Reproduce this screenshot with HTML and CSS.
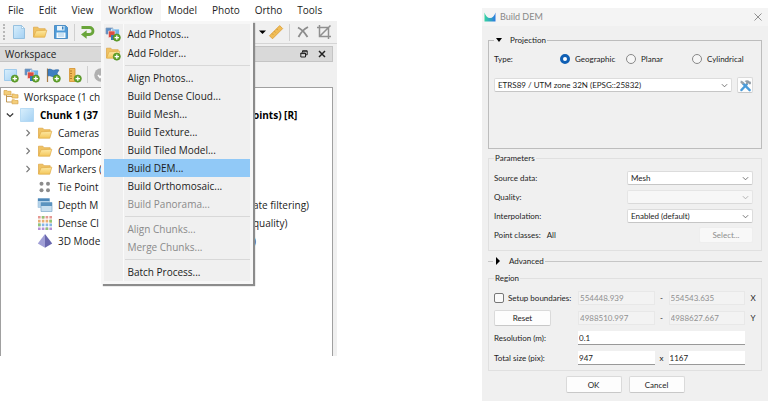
FILE: index.html
```html
<!DOCTYPE html>
<html lang="en">
<head>
<meta charset="utf-8">
<title>Build DEM</title>
<link rel="stylesheet" href="styles.css">
</head>
<body>
<svg class="defs" aria-hidden="true">
  <defs>
    <linearGradient id="gBlue" x1="0" y1="0" x2="1" y2="1"><stop offset="0" stop-color="#d9effc"/><stop offset="1" stop-color="#a3d0f3"/></linearGradient>
    <linearGradient id="gFold" x1="0" y1="0" x2="0" y2="1"><stop offset="0" stop-color="#fde9a4"/><stop offset="1" stop-color="#f3c65a"/></linearGradient>
    <linearGradient id="gLogo" x1="0" y1="0" x2="1" y2="0"><stop offset="0" stop-color="#35d5a0"/><stop offset="1" stop-color="#2b79e0"/></linearGradient>
    <symbol id="plus" viewBox="0 0 16 16"><circle cx="11.8" cy="11.6" r="3.6" fill="#62a32c" stroke="#4c8a1e" stroke-width=".6"/><path d="M11.8 9.4v4.4M9.6 11.6h4.4" stroke="#fff" stroke-width="1.3"/></symbol>
    <symbol id="folder" viewBox="0 0 16 16"><path d="M1.5 13V3.2h4.3l1.4 1.5h6V7" fill="#efc263" stroke="#dca543" stroke-width=".7"/><path d="M1.5 13.2 4 6.8l10.8-.6-2 7z" fill="url(#gFold)" stroke="#dfab48" stroke-width=".7"/></symbol>
    <symbol id="photos" viewBox="0 0 16 16"><path d="M1 2h7v6H1z" fill="#5d8fc6" stroke="#7e99b7" stroke-width=".7"/><path d="M6.5 3h8v7h-8z" fill="#72b5e6" stroke="#eef4f8" stroke-width=".8"/><path d="M3.5 5h6.5v6.5H3.500z" fill="#dc4d42" stroke="#f3d9d6" stroke-width=".7"/><path d="M6 9h5v5H6z" fill="#3778b7"/></symbol>
  </defs>
</svg>
<main class="stage">
  <section class="app">
    <nav class="menubar">
      <button>File</button><button>Edit</button><button>View</button>
      <div class="menu-anchor">
        <button class="open">Workflow</button>
        <div class="menu" role="menu">
          <button class="tall"><svg viewBox="0 0 16 16"><use href="#photos"/><use href="#plus"/></svg><span>Add Photos...</span></button>
          <button class="tall"><svg viewBox="0 0 16 16"><use href="#folder"/><use href="#plus"/></svg><span>Add Folder...</span></button>
          <hr>
          <button><span>Align Photos...</span></button>
          <button><span>Build Dense Cloud...</span></button>
          <button><span>Build Mesh...</span></button>
          <button><span>Build Texture...</span></button>
          <button><span>Build Tiled Model...</span></button>
          <button class="current"><span>Build DEM...</span></button>
          <button><span>Build Orthomosaic...</span></button>
          <button disabled><span>Build Panorama...</span></button>
          <hr>
          <button disabled><span>Align Chunks...</span></button>
          <button disabled><span>Merge Chunks...</span></button>
          <hr>
          <button><span>Batch Process...</span></button>
        </div>
      </div>
      <button>Model</button><button>Photo</button><button>Ortho</button><button>Tools</button>
    </nav>
    <div class="toolbar">
      <i class="grip"></i>
      <svg viewBox="0 0 16 16"><path d="M2.500 1.500h8l3 3v10h-11z" fill="url(#gBlue)" stroke="#8dbbdc" stroke-width=".9"/><path d="M10.500 1.500v3h3z" fill="#fff" stroke="#8dbbdc" stroke-width=".7"/></svg>
      <svg viewBox="0 0 16 16"><use href="#folder"/></svg>
      <svg viewBox="0 0 16 16"><path d="M1.500 1.500h11l2 2v11h-13z" fill="#4f9bd8" stroke="#3b82bd" stroke-width=".8"/><path d="M4 2h7.500v4.500H4z" fill="#e9f4fc"/><path d="M9 2.500h1.500v3H9z" fill="#3b82bd"/><path d="M3.500 8.500h9V14h-9z" fill="#f5fafd"/><path d="M5 10h6M5 12h6" stroke="#8ebfe3" stroke-width=".8"/></svg>
      <i class="sep"></i>
      <svg viewBox="0 0 16 16"><path d="M1.500 3.500h8a3.400 3.400 0 0 1 0 7H5" fill="none" stroke="#69a53a" stroke-width="2.800"/><path d="M6.600 6.200v8.600L1 10.500z" fill="#69a53a"/></svg>
      <svg viewBox="0 0 16 16"><path d="M12.500 3h-6a3.600 3.600 0 0 0 0 7.500H11" fill="none" stroke="#b5b5b5" stroke-width="2.800"/></svg>
      <span class="push"></span>
      <span class="measure"><svg class="mini" viewBox="0 0 8 16"><path d="M1 6.500h7L4.500 10z" fill="#000"/></svg>
      <svg viewBox="0 0 16 16"><path d="M1.500 11.800 11.700 1.600l3 3L4.500 14.800z" fill="#f0bd57" stroke="#d99a35" stroke-width=".8"/><path d="m4 9.500 1.300 1.300M6.300 7.200l1.300 1.300M8.600 4.900l1.300 1.300" stroke="#c98b2d" stroke-width=".7"/></svg></span>
      <i class="sep"></i>
      <svg viewBox="0 0 16 16"><path d="M3 3.500c4 2 7 5.500 9.500 9.500M13 3C9 5 5.500 9 3.500 13" fill="none" stroke="#8c8c8c" stroke-width="1.800"/></svg>
      <svg viewBox="0 0 16 16"><path d="M1 3.500h11.500V15M3.500 1v11.500H15M3.500 12.500l11-11" fill="none" stroke="#909090" stroke-width="1.500"/></svg>
    </div>
    <header class="pane-title"><span>Workspace</span>
      <button aria-label="Float"><svg viewBox="0 0 8 8"><path d="M2.500 2.500V.8h4.700v4H5.500M.8 3h4.700v4H.8zM.8 3.600h4.700M2.500 1.200h4.700" fill="none" stroke="#222" stroke-width="1"/></svg></button>
      <button aria-label="Close"><svg viewBox="0 0 8 8"><path d="m1 1 6 6M7 1 1 7" stroke="#222" stroke-width="1.500"/></svg></button>
    </header>
    <div class="toolbar second">
      <svg viewBox="0 0 16 16"><path d="M1.500 2.500h12v11h-12z" fill="url(#gBlue)" stroke="#8fc3ea" stroke-width=".8"/><use href="#plus"/></svg>
      <svg viewBox="0 0 16 16"><use href="#photos"/><use href="#plus"/></svg>
      <svg viewBox="0 0 16 16"><path d="M2.500 1.500V15" stroke="#a77b44" stroke-width="1.200"/><path d="M3 2.500c3-1.500 4 1.500 6.500.6 1.800-.6 3-.6 4.500-.1l-2 3.300 2 3.200c-2-.7-3.200-.3-4.500.2C7 10.600 5.500 7.800 3 9z" fill="#3f7fc1" stroke="#2c66a3" stroke-width=".6"/><use href="#plus"/></svg>
      <svg viewBox="0 0 16 16"><path d="M3.500 1.500H9v13H3.500z" fill="#f0b958" stroke="#d3922f" stroke-width=".8"/><path d="M4 4h2M4 6.500h2M4 9h2M4 11.500h2" stroke="#a86f1e" stroke-width=".8"/><use href="#plus"/></svg>
      <i class="sep"></i>
      <svg viewBox="0 0 16 16"><circle cx="8" cy="8" r="6.800" fill="#b0b0b0"/><path d="m5 8 2 2.500 4-5" fill="none" stroke="#fff" stroke-width="1.500"/></svg>
    </div>
    <ul class="tree">
      <li><span class="node"><svg viewBox="0 0 16 16"><path d="M3.500 5v8H9M3.500 7.500H9" fill="none" stroke="#b98f45" stroke-width=".9"/><path d="M1 1.500h3l.8.8H8V6H1zM9 5h2.500l.7.7H15V9H9zM9 10.800h2.500l.7.7H15v3.300H9z" fill="#f4ce79" stroke="#d9a54b" stroke-width=".7"/></svg>Workspace (1 ch</span></li>
      <li class="l1"><span class="node"><svg class="chev" viewBox="0 0 8 8"><path d="m.8 2.500 3.200 3 3.200-3" fill="none" stroke="#333" stroke-width="1.200"/></svg><svg viewBox="0 0 16 16"><path d="M1.500 1.500h13v13h-13z" fill="url(#gBlue)" stroke="#a5d1f0" stroke-width=".7"/></svg><b>Chunk 1 (37</b></span><b>oints) [R]</b></li>
      <li class="l2"><span class="node"><svg class="chev" viewBox="0 0 8 8"><path d="m2.500.8 3 3.200-3 3.200" fill="none" stroke="#777" stroke-width="1.200"/></svg><svg viewBox="0 0 16 16"><use href="#folder"/></svg>Cameras</span></li>
      <li class="l2"><span class="node"><svg class="chev" viewBox="0 0 8 8"><path d="m2.500.8 3 3.200-3 3.200" fill="none" stroke="#777" stroke-width="1.200"/></svg><svg viewBox="0 0 16 16"><use href="#folder"/></svg>Compone</span></li>
      <li class="l2"><span class="node"><svg class="chev" viewBox="0 0 8 8"><path d="m2.500.8 3 3.200-3 3.200" fill="none" stroke="#777" stroke-width="1.200"/></svg><svg viewBox="0 0 16 16"><use href="#folder"/></svg>Markers (</span></li>
      <li class="l2"><span class="node"><i class="chev"></i><svg viewBox="0 0 16 16"><g fill="#8c8c8c"><circle cx="4.500" cy="4.800" r="2"/><circle cx="11" cy="4.800" r="2"/><circle cx="4.500" cy="11.200" r="2"/><circle cx="11" cy="11.200" r="2"/></g></svg>Tie Point</span></li>
      <li class="l2"><span class="node"><i class="chev"></i><svg viewBox="0 0 16 16"><path d="M1 1.500h11.500v9H1z" fill="#b5d3ea" stroke="#9cbfda" stroke-width=".6"/><path d="M1 1.500h11.500v2.500H1z" fill="#4c87b8"/><path d="M4 5.500h11v9H4z" fill="#c9dfef" stroke="#7eabcc" stroke-width=".7"/><path d="M4 5.500h11V9H4z" fill="#5b93bf"/></svg>Depth M</span><span>ate filtering)</span></li>
      <li class="l2"><span class="node"><i class="chev"></i><svg viewBox="0 0 16 16"><g fill="none" stroke-width="2.600" stroke-dasharray="2.600 1.200"><path d="M1 2.300h14.500" stroke="#e59892"/><path d="M1 6.100h14.500" stroke="#eaae72"/><path d="M1 9.900h14.500" stroke="#85b5e5"/><path d="M1 13.700h14.500" stroke="#b590d5"/></g><path d="M4.800 1h2.600v2.600H4.800zM12.400 4.800H15v2.600h-2.600zM1 8.600h2.600v2.600H1zM8.600 12.400h2.600V15H8.600z" fill="#91c575"/></svg>Dense Cl</span><span>quality)</span></li>
      <li class="l2"><span class="node"><i class="chev"></i><svg viewBox="0 0 16 16"><path d="M8 1 .8 10.500 8 14.800z" fill="#a09fd6"/><path d="m8 1 7.200 9.500L8 14.800z" fill="#6967ae"/></svg>3D Mode</span><span>)</span></li>
    </ul>
  </section>

  <form class="dialog">
    <header class="titlebar">
      <svg viewBox="0 0 12 10"><path d="M.5.500C1.500 4 3.500 6 6 6s4.500-2 5.500-5.500v9H.5z" fill="url(#gLogo)"/></svg>
      <span>Build DEM</span>
      <button type="button" aria-label="Close"><svg viewBox="0 0 8 8"><path d="m.5.5 7 7M7.500.5l-7 7" stroke="#777" stroke-width=".8"/></svg></button>
    </header>
    <fieldset class="projection">
      <legend><svg viewBox="0 0 8 8"><path d="M1 2h6L4 6z"/></svg>Projection</legend>
      <div class="types"><span>Type:</span>
        <label><input type="radio" name="type" checked>Geographic</label>
        <label><input type="radio" name="type">Planar</label>
        <label><input type="radio" name="type">Cylindrical</label>
      </div>
      <div class="crs">
        <select aria-label="Coordinate system"><option>ETRS89 / UTM zone 32N (EPSG::25832)</option></select>
        <button type="button" class="tool" aria-label="Settings"><svg viewBox="0 0 14 14"><path d="M11.500 12 4.500 5" stroke="#4a9bd9" stroke-width="2.600" stroke-linecap="round"/><path d="M2 1.500 1.500 4l2.300 2L6 4.500 4.300 2.600z" fill="#9aa4ad"/><path d="m2.500 12 6-6.300" stroke="#4a9bd9" stroke-width="2.400" stroke-linecap="round"/><path d="M6 2.500c2-1.800 4-1.500 5.500.3l1.300.2v2.500l-1.300.3L9.800 4.500 8.500 6 7 4.800l1-1.300z" fill="#929ca5"/></svg></button>
      </div>
    </fieldset>
    <fieldset class="params">
      <legend>Parameters</legend>
      <label for="src">Source data:</label><select id="src"><option>Mesh</option></select>
      <label for="qual">Quality:</label><select id="qual" disabled><option></option></select>
      <label for="interp">Interpolation:</label><select id="interp"><option>Enabled (default)</option></select>
      <span class="classes"><span>Point classes:</span><span>All</span></span><button type="button" disabled>Select...</button>
    </fieldset>
    <fieldset class="advanced"><legend><svg viewBox="0 0 8 8"><path d="M2 0v8l4-4z"/></svg>Advanced</legend></fieldset>
    <fieldset class="region">
      <legend>Region</legend>
      <label class="check"><input type="checkbox">Setup boundaries:</label>
      <input type="text" disabled value="554448.939" aria-label="X from"><span>-</span><input type="text" disabled value="554543.635" aria-label="X to"><span>X</span>
      <button type="button">Reset</button>
      <input type="text" disabled value="4988510.997" aria-label="Y from"><span>-</span><input type="text" disabled value="4988627.667" aria-label="Y to"><span>Y</span>
      <label for="res">Resolution (m):</label><input type="text" class="wide" id="res" value="0.1">
      <label for="tw">Total size (pix):</label><input type="text" id="tw" value="947"><span>x</span><input type="text" value="1167" aria-label="Total height">
    </fieldset>
    <footer><button type="button">OK</button><button type="button">Cancel</button></footer>
  </form>
</main>
</body>
</html>
```

FILE: styles.css
```css
* { box-sizing: border-box; }
body { margin: 0; background: #fff; color: #1c1c1c; font: 10px/18px "Open Sans", "Noto Sans", sans-serif; }
button, input, select { font: inherit; color: inherit; margin: 0; }
button { border: 0; background: none; padding: 0; }
svg { display: block; flex: none; }
.defs { position: absolute; width: 0; height: 0; }
.stage { display: grid; grid-template-columns: 337fr 145fr 286fr; min-height: 100vh; align-items: start; }

/* Application window */
.app { background: #f0f0f0; min-width: 0; }
.menubar { display: flex; height: 21px; padding-left: 1px; background: #fff; white-space: nowrap; }
.menubar > button, .menu-anchor > button { padding: 0 8px 0 7px; line-height: 21px; }
.menu-anchor { position: relative; }
.menu-anchor > .open { background: #f5f5f5; }
.menu { position: absolute; z-index: 2; top: 100%; left: 0; width: 152px; padding: 3px; background: linear-gradient(90deg, #efefef 19px, #fafafa 19px 20px, #f0f0f0 20px) content-box, #f7f7f7; box-shadow: 2px 2px 1px #8c8c8c; }
.menu button { display: flex; align-items: center; width: 100%; height: 18px; }
.menu .tall { height: 19px; }
.menu button svg { width: 16px; height: 16px; margin-left: 1px; }
.menu button span { padding-left: 23px; }
.menu button svg + span { padding-left: 6px; }
.menu .current { background: #91c9f7; }
.menu button:disabled { color: #8a8a8a; }
.menu hr { height: 1px; margin: 3px 0 3px 21px; border: 0; background: #d8d8d8; }
.toolbar { display: flex; align-items: center; gap: 5px; height: 23px; padding: 0 5px 0 3px; border-bottom: 1px solid #d5d5d5; }
.toolbar svg { width: 16px; height: 16px; }
.toolbar .mini { width: 8px; }
.measure { display: flex; gap: 2px; }
.grip { width: 3px; height: 16px; border-left: 2px dotted #b8b8b8; }
.sep { width: 1px; height: 17px; background: #d0d0d0; }
.push { flex: 1; }
.pane-title { display: flex; align-items: center; gap: 10px; height: 16px; margin: 2px 4px 0 0; padding: 0 6px 0 5px; background: #d9d9d9; border: 1px solid #c4c4c4; border-left: 0; }
.pane-title span { flex: 1; }
.pane-title svg { width: 8px; height: 8px; }
.toolbar.second { height: 25px; border: 0; }
.tree { min-height: 269px; margin: 0 4px 0 0; padding: 0; list-style: none; background: #fff; border: 1px solid #a0a0a0; border-bottom: 0; }
.tree li { display: grid; grid-template-columns: 100px 1fr; column-gap: 152px; height: 18px; white-space: nowrap; }
.node { display: flex; align-items: center; gap: 5px; padding-left: 2px; }
.node svg { width: 16px; height: 16px; }
.node .chev { width: 8px; height: 8px; flex: none; }
.l1 .node { padding-left: 5px; }
.l2 .node { padding-left: 23px; }
b { color: #000; }

/* Build DEM dialog */
.dialog { grid-column: 3; margin-top: 8px; min-height: calc(100vh - 8px); padding: 0 6px; background: #f0f0f0; font: 8px/12px Lato, "Open Sans", sans-serif; min-width: 0; }
.titlebar { display: flex; align-items: center; gap: 4px; height: 18px; margin: 0 -6px 8px; padding: 0 6px 0 2px; background: #f4f4f4; color: #888; font-size: 9px; line-height: 14px; }
.titlebar span { flex: 1; }
.titlebar > svg { width: 12px; height: 10px; }
.titlebar button svg { width: 8px; height: 8px; }
fieldset { min-width: 0; margin: 0; padding: 0 8px 0 5px; border: 1px solid #e0e0e0; }
legend { padding: 0 1px; display: flex; align-items: center; gap: 7px; }
legend svg { width: 8px; height: 8px; }
.projection { min-height: 115px; border-color: #bdbdbd; }
.types { display: grid; grid-template-columns: 66px 66px 66px 1fr; align-items: center; height: 26px; }
.types label { display: flex; align-items: center; gap: 5px; }
input[type="radio"] { appearance: none; flex: none; width: 10px; height: 10px; border: 1px solid #888; border-radius: 50%; background: #f6f6f6; }
input[type="radio"]:checked { border: 3px solid #0f5fb4; background: #fff; }
.crs { display: flex; align-items: center; gap: 5px; margin-top: 5px; }
.crs select { flex: 1; min-width: 0; }
select { appearance: none; height: 14px; padding: 0 14px 0 3px; border: 1px solid #dcdcdc; border-bottom-color: #c6c6c6; border-radius: 2px; line-height: 12px;
  background: #fff url("data:image/svg+xml,%3Csvg xmlns='http://www.w3.org/2000/svg' viewBox='0 0 8 8'%3E%3Cpath d='M1 2.500 4 5.500 7 2.500' fill='none' stroke='%23666'/%3E%3C/svg%3E") right 3px center / 7px 7px no-repeat; }
select:disabled { opacity: .5; }
.dialog fieldset button, .dialog footer button { height: 16px; border: 1px solid #dadada; border-bottom-color: #c8c8c8; border-radius: 2px; background: #fdfdfd; text-align: center; }
.dialog fieldset button:disabled { color: #8d8d8d; background: #f8f8f8; border-color: #eee; }
.dialog fieldset .tool { display: grid; place-items: center; width: 16px; }
.tool svg { width: 13px; height: 13px; }
.params { display: grid; grid-template-columns: 133px 1fr; grid-auto-rows: 14px; row-gap: 5px; align-items: center; min-height: 99px; margin-top: 3px; padding-top: 7px; }
.params > button { justify-self: end; width: 54px; }
.classes { display: flex; gap: 6px; }
.advanced { height: 12px; margin-top: 4px; border-width: 1px 0 0; border-color: #c6c6c6; }
.region { display: grid; grid-template-columns: 84px 1fr 14px 1fr 16px; grid-auto-rows: 14px; row-gap: 6px; align-items: center; min-height: 99px; margin-top: 5px; padding: 7px 0 0 5px; }
.region > span { text-align: center; }
.region > label { grid-column: 1; }
.region > button { width: 57px; }
.region > .wide { grid-column: 2 / 5; }
.check { display: flex; align-items: center; gap: 4px; white-space: nowrap; }
input[type="checkbox"] { appearance: none; flex: none; width: 10px; height: 10px; border: 1px solid #777; border-radius: 2px; background: #fafafa; }
input[type="text"] { width: 100%; min-width: 0; height: 14px; padding: 0 1px; border: 0; border-bottom: 1px solid #999; background: #fff; }
input[type="text"]:disabled { color: #909090; background: #f3f3f3; border: 1px solid #e8e8e8; }
footer { display: flex; justify-content: center; gap: 7px; margin-top: 5px; }
.dialog footer button { width: 56px; height: 17px; }
```
